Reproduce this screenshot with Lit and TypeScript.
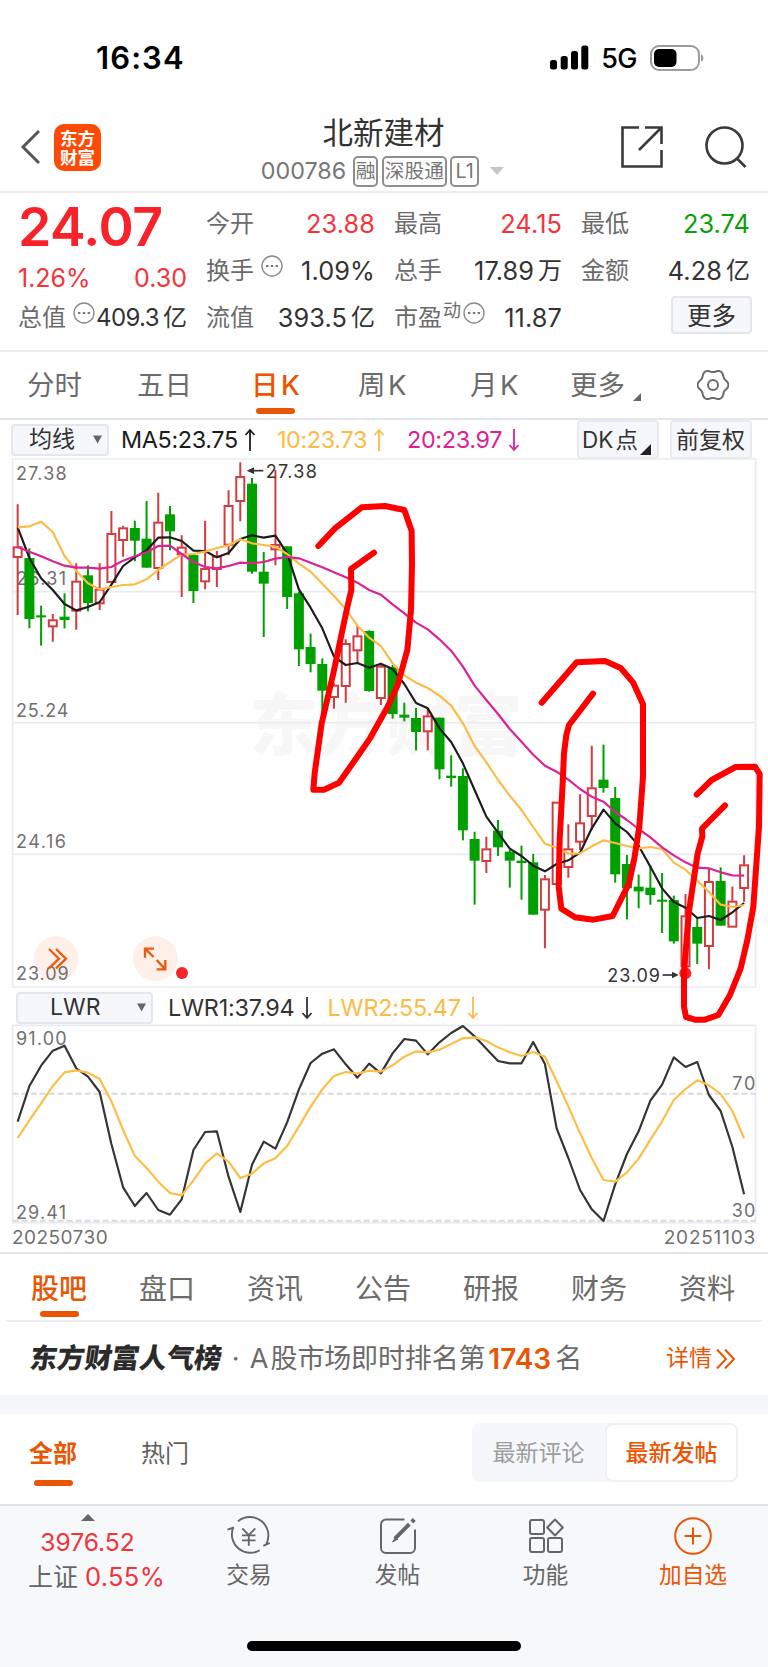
import { LitElement, html, css, svg } from "lit";
import { customElement, property, state } from "lit/decorators.js";
import { classMap } from "lit/directives/class-map.js";

// Both charts are drawn in units of a third of a pixel
const STEP = 35.15;
const FIRST = 53;
const xAt = (i: number) => FIRST + i * STEP;
const toPoints = (ys: number[]) => ys.map((y, i) => `${xAt(i).toFixed(1)},${y}`).join(" ");

// high, body top, body bottom, low, 1 = rising
const CANDLES = [
    [163, 290, 322, 495, 1], [295, 324, 507, 535, 0], [467, 496, 502, 587, 0], [492, 509, 530, 575, 1],
    [430, 500, 510, 535, 0], [340, 393, 483, 539, 1], [346, 376, 459, 484, 0], [340, 417, 461, 480, 1],
    [183, 250, 397, 397, 1], [227, 233, 271, 320, 1], [212, 234, 272, 334, 0], [153, 266, 353, 353, 0],
    [128, 216, 355, 390, 1], [168, 193, 244, 301, 0], [256, 291, 314, 441, 1], [315, 315, 423, 459, 0],
    [212, 355, 395, 418, 1], [303, 318, 358, 411, 1], [121, 166, 285, 316, 1], [37, 79, 154, 214, 1],
    [84, 101, 365, 371, 0], [306, 365, 401, 561, 0], [60, 283, 299, 346, 1], [289, 289, 441, 477, 0],
    [425, 430, 598, 648, 0], [551, 591, 642, 667, 0], [625, 642, 722, 800, 0], [700, 705, 742, 776, 1],
    [568, 580, 709, 758, 1], [527, 557, 602, 640, 1], [541, 543, 723, 725, 0], [645, 648, 745, 765, 1],
    [645, 652, 792, 806, 0], [758, 794, 803, 814, 0], [774, 804, 846, 901, 0], [775, 797, 845, 901, 1],
    [803, 803, 958, 988, 0], [916, 977, 984, 1010, 0], [955, 978, 1141, 1171, 0], [1145, 1167, 1232, 1364, 0],
    [1160, 1196, 1234, 1269, 1], [1110, 1142, 1192, 1218, 0], [1200, 1205, 1232, 1313, 0], [1187, 1232, 1239, 1349, 0],
    [1212, 1237, 1394, 1394, 0], [1275, 1286, 1380, 1495, 1], [1056, 1056, 1303, 1303, 1], [1123, 1196, 1252, 1283, 1],
    [1033, 1118, 1176, 1200, 1], [887, 1013, 1099, 1140, 1], [884, 989, 1014, 1028, 0], [1011, 1044, 1273, 1298, 0],
    [1215, 1242, 1315, 1408, 0], [1274, 1310, 1324, 1375, 0], [1245, 1313, 1335, 1364, 0], [1269, 1349, 1355, 1449, 0],
    [1337, 1350, 1474, 1481, 0], [1332, 1397, 1550, 1570, 1], [1405, 1431, 1481, 1542, 0], [1255, 1294, 1489, 1558, 1],
    [1252, 1293, 1427, 1427, 0], [1310, 1353, 1431, 1431, 1], [1216, 1244, 1315, 1355, 1],
];

const MA5 = [232, 324, 385, 420, 462, 481, 471, 456, 404, 348, 322, 301, 263, 262, 273, 302, 303, 322, 309, 267,
    256, 263, 257, 310, 418, 473, 535, 620, 645, 639, 653, 641, 657, 702, 759, 775, 835, 876, 940, 1020,
    1100, 1148, 1196, 1218, 1247, 1264, 1242, 1231, 1208, 1135, 1079, 1120, 1146, 1187, 1250, 1315, 1356, 1373, 1404, 1398,
    1410, 1387, 1359];

const MA10 = [232, 229, 215, 246, 318, 362, 400, 418, 411, 405, 403, 388, 360, 336, 314, 312, 305, 294, 286, 268,
    280, 285, 290, 312, 341, 365, 401, 438, 477, 527, 563, 588, 640, 676, 698, 714, 737, 767, 820, 888,
    937, 990, 1037, 1080, 1131, 1181, 1193, 1211, 1210, 1189, 1171, 1179, 1188, 1195, 1191, 1197, 1238, 1259, 1292, 1326,
    1364, 1371, 1365];

const MA20 = [291, 305, 319, 334, 347, 353, 353, 356, 351, 332, 319, 307, 288, 287, 312, 336, 351, 355, 348, 338,
    340, 336, 326, 321, 325, 338, 352, 367, 382, 398, 420, 434, 463, 490, 518, 538, 568, 602, 650, 707,
    750, 792, 837, 875, 914, 947, 965, 989, 1017, 1040, 1055, 1086, 1110, 1137, 1162, 1192, 1216, 1237, 1253, 1255,
    1267, 1276, 1277];

const LWR1 = [335, 228, 167, 122, 107, 175, 200, 246, 402, 532, 588, 549, 600, 614, 568, 420, 366, 364, 500, 606,
    464, 395, 416, 337, 239, 159, 131, 118, 163, 203, 161, 190, 130, 87, 92, 133, 97, 69, 48, 79,
    116, 153, 160, 160, 96, 162, 355, 444, 540, 598, 633, 523, 432, 364, 272, 224, 142, 171, 156, 255,
    303, 411, 553];

const LWR2 = [384, 331, 280, 228, 187, 181, 188, 207, 274, 360, 438, 474, 515, 549, 556, 511, 461, 430, 455, 504,
    491, 460, 445, 408, 350, 290, 238, 198, 186, 191, 182, 185, 166, 140, 124, 127, 119, 102, 85, 82,
    93, 112, 127, 138, 126, 140, 213, 289, 370, 444, 510, 515, 487, 446, 389, 334, 270, 237, 211, 226,
    252, 303, 385];

const MARKS = [
    "955,288 1005,235 1085,172 1155,168 1213,180 1235,243 1236,345 1233,480 1222,600 1193,705 1163,770 1110,865 1065,930 1017,998 972,1019 940,1019 944,970 965,820 1000,670 1040,480 1054,420 1053,357 1122,308",
    "1625,758 1730,637 1815,633 1862,654 1899,697 1929,763 1929,980 1918,1130 1903,1225 1887,1300 1838,1398 1780,1409 1725,1402 1684,1376 1676,1310 1679,1170 1688,1000 1692,910 1699,855 1707,825 1779,731",
    "2090,1034 2135,990 2207,951 2265,950 2279,972 2277,1130 2260,1370 2242,1470 2222,1555 2190,1635 2155,1695 2115,1709 2085,1709 2058,1701 2052,1670 2052,1570 2066,1390 2093,1210 2107,1160 2106,1136 2175,1066",
];

// Six-lobed outline of the settings icon
const GEAR = Array.from({ length: 72 }, (_, i) => {
    const a = i * Math.PI / 36;
    const r = 14.2 + 1.3 * Math.cos(6 * a);
    return `${(16 + r * Math.cos(a)).toFixed(2)},${(16 + r * Math.sin(a)).toFixed(2)}`;
}).join(" ");

@customElement("kline-chart")
export class KlineChart extends LitElement {
    static styles = css`
        :host {
            display: block;
            height: 528px;
            position: relative;
            z-index: 1;
        }
        svg {
            display: block;
            width: 768px;
            height: 528px;
            overflow: visible;
        }
        .grid {
            stroke: #e9ebf3;
            stroke-width: 5;
            fill: none;
        }
        .axis {
            font: 54px Inter, sans-serif;
            fill: #707070;
        }
        .tag {
            font: 54px Inter, sans-serif;
            fill: #333;
        }
        .watermark {
            font: 900 206px "Noto Sans CJK SC", sans-serif;
            fill: #f7f7f7;
        }
        .up rect {
            fill: none;
            stroke: #d23c41;
            stroke-width: 6;
        }
        .up path {
            stroke: #d23c41;
            stroke-width: 6;
        }
        .down rect {
            fill: #00a000;
        }
        .down path {
            stroke: #00a000;
            stroke-width: 6;
        }
        .line {
            fill: none;
            stroke-width: 6.5;
            stroke-linejoin: round;
        }
        .ma5 {
            stroke: #1c1c1c;
        }
        .ma10 {
            stroke: #fdbb45;
        }
        .ma20 {
            stroke: #dd2196;
        }
        .mark {
            fill: none;
            stroke: #fe0000;
            stroke-width: 18;
            stroke-linecap: round;
            stroke-linejoin: round;
        }
        .arrow {
            fill: none;
            stroke: #333;
            stroke-width: 5;
        }
        .tip {
            fill: #333;
        }
        .halo {
            fill: #feefe8;
        }
        .orange {
            fill: none;
            stroke: #ea5b10;
            stroke-width: 7;
        }
        .alert {
            fill: #f8222a;
        }
    `;

    candle = (c: number[], i: number) => {
        const x = xAt(i);
        const [high, top, bottom, low, up] = c;
        if (up) {
            return svg`<g class="up">
                <path d="M${x} ${high}V${top}M${x} ${bottom}V${low}"></path>
                <rect x=${x - 12} y=${top + 2} width="24" height=${bottom - top - 3}></rect>
            </g>`;
        }
        return svg`<g class="down">
            <path d="M${x} ${high}V${low}"></path>
            <rect x=${x - 15} y=${top} width="30" height=${bottom - top}></rect>
        </g>`;
    }

    render() {
        return html`
        <svg viewBox="0 27 2304 1584">
            <text class="watermark" x="748" y="899" textLength="820">东方财富</text>
            <path class="grid" d="M38 27H2267V1611H38ZM38 425H2267M38 818H2267M38 1213H2267"></path>
            <circle class="halo" cx="168" cy="1526" r="67"></circle>
            <circle class="halo" cx="466" cy="1526" r="67"></circle>
            <text class="axis" x="48" y="90" textLength="152">27.38</text>
            <text class="axis" x="48" y="404" textLength="150">26.31</text>
            <text class="axis" x="48" y="800" textLength="157">25.24</text>
            <text class="axis" x="48" y="1195" textLength="150">24.16</text>
            <text class="axis" x="48" y="1591" textLength="158">23.09</text>
            ${CANDLES.map(this.candle)}
            <polyline class="line ma5" points=${toPoints(MA5)}></polyline>
            <polyline class="line ma10" points=${toPoints(MA10)}></polyline>
            <polyline class="line ma20" points=${toPoints(MA20)}></polyline>
            <path class="arrow" d="M790 62H750"></path>
            <path class="tip" d="M740 62L762 52V72Z"></path>
            <text class="tag" x="797" y="83" textLength="154">27.38</text>
            <text class="tag" x="1822" y="1597" textLength="158">23.09</text>
            <path class="arrow" d="M1988 1575H2026"></path>
            <path class="tip" d="M2036 1575L2016 1565V1585Z"></path>
            <path class="orange" d="M147 1497L177 1526L147 1555M168 1497L198 1526L168 1555"></path>
            <path class="orange" d="M462 1496H435V1523M435 1496L461 1521M470 1558H496V1530M470 1530L496 1558"></path>
            <circle class="alert" cx="546" cy="1569" r="18"></circle>
            <circle class="alert" cx="2056" cy="1570" r="18"></circle>
            ${MARKS.map(m => svg`<polyline class="mark" points=${m}></polyline>`)}
        </svg>`;
    }
}

@customElement("lwr-chart")
export class LwrChart extends LitElement {
    static styles = css`
        :host {
            display: block;
            height: 198px;
        }
        svg {
            display: block;
            width: 768px;
            height: 198px;
            overflow: visible;
        }
        .frame {
            fill: none;
            stroke: #e9ebf3;
            stroke-width: 5;
        }
        .level {
            stroke: #dadadb;
            stroke-width: 6;
            stroke-dasharray: 18 9;
        }
        .axis {
            font: 54px Inter, sans-serif;
            fill: #707070;
        }
        .line {
            fill: none;
            stroke-width: 6.5;
            stroke-linejoin: round;
        }
        .lwr1 {
            stroke: #343434;
        }
        .lwr2 {
            stroke: #fdbe45;
        }
    `;

    render() {
        return html`
        <svg viewBox="0 45 2304 594">
            <path class="frame" d="M38 46H2267V638H38Z"></path>
            <path class="level" d="M38 251H2267M38 632H2267"></path>
            <text class="axis" x="48" y="105" textLength="152">91.00</text>
            <text class="axis" x="48" y="628" textLength="150">29.41</text>
            <text class="axis" x="2197" y="239" textLength="69">70</text>
            <text class="axis" x="2195" y="620" textLength="71">30</text>
            <polyline class="line lwr1" points=${toPoints(LWR1)}></polyline>
            <polyline class="line lwr2" points=${toPoints(LWR2)}></polyline>
        </svg>`;
    }
}

@customElement("quote-cell")
export class QuoteCell extends LitElement {
    @property() label = "";
    @property() value = "";
    @property() unit = "";
    @property() sup = "";
    @property() tone = "";
    @property({ type: Boolean }) info = false;

    static styles = css`
        :host {
            display: flex;
            align-items: center;
            height: 47px;
            color: #333;
            white-space: nowrap;
        }
        .label {
            color: #6b6b6b;
        }
        .sup {
            font-size: 18px;
            color: #6b6b6b;
            margin: -13px 0 0 1px;
        }
        svg {
            flex: none;
            margin: -10px 0 0 7px;
        }
        .sup + svg {
            margin-left: 2px;
        }
        .value {
            margin-left: auto;
            font-size: 25.3px;
            letter-spacing: 0.1px;
        }
        :host([tight]) .value {
            font-size: 24px;
            letter-spacing: -0.6px;
        }
        .rise {
            color: #f5333a;
        }
        .fall {
            color: #0aa00a;
        }
        .unit {
            margin-left: 4px;
        }
    `;

    render() {
        return html`
        <span class="label">${this.label}</span>
        ${this.sup ? html`<span class="sup">${this.sup}</span>` : ""}
        ${this.info ? html`<svg width="22" height="22" viewBox="0 0 22 22">
            <circle cx="11" cy="11" r="10" fill="none" stroke="#8a8a8a" stroke-width="1.4"></circle>
            <path d="M5 11h2.4M9.8 11h2.4M14.6 11h2.4" stroke="#777" stroke-width="2.2"></path>
        </svg>` : ""}
        <span class="value ${this.tone}">${this.value}</span>
        ${this.unit ? html`<span class="unit">${this.unit}</span>` : ""}`;
    }
}

@customElement("app-root")
export class AppRoot extends LitElement {
    @state() period = "日\u200AK";
    @state() section = "股吧";

    static styles = css`
        * {
            box-sizing: border-box;
        }
        :host {
            display: block;
            width: 768px;
            height: 1667px;
            overflow: hidden;
            background: #fff;
            color: #333;
            font-family: Inter, "Noto Sans CJK SC", sans-serif;
            font-size: 24px;
            line-height: 1;
            white-space: nowrap;
        }
        svg {
            display: block;
            flex: none;
        }
        .status {
            display: flex;
            align-items: center;
            height: 115px;
            padding: 0 64px 0 96px;
            color: #000;
        }
        .clock {
            font-size: 31px;
            font-weight: 600;
            letter-spacing: 1.1px;
        }
        .signal {
            margin-left: auto;
        }
        .net {
            margin: 2px 13px 0 12px;
            font-size: 27px;
            font-weight: 500;
            letter-spacing: -0.5px;
        }
        .header {
            display: flex;
            align-items: center;
            height: 78px;
            padding: 0 21px 12px 20px;
            border-bottom: 2px solid #ededef;
        }
        .logo {
            width: 47px;
            height: 47px;
            margin-left: 13px;
            padding: 4px 6px;
            border-radius: 10px;
            background: #ff4a05;
            color: #fff;
            font: 700 17.5px/19px "Noto Sans CJK SC", sans-serif;
            white-space: normal;
            word-break: break-all;
        }
        .title {
            flex: 1;
            display: flex;
            flex-direction: column;
            align-items: center;
            padding-top: 13px;
        }
        .name {
            font-size: 30.5px;
            line-height: 35px;
            padding-left: 45px;
        }
        .code {
            display: flex;
            align-items: center;
            gap: 3.5px;
            height: 43px;
            padding-left: 43px;
            color: #777;
            font-size: 23.3px;
        }
        .code span {
            margin-right: 3px;
        }
        .code b {
            height: 31px;
            padding: 0 1px;
            border: 2px solid #8e8e8e;
            border-radius: 5px;
            font-weight: 400;
            font-size: 19.7px;
            line-height: 27px;
        }
        .code b:last-of-type {
            padding: 0 3px;
        }
        .code svg {
            margin-left: 8px;
        }
        .search {
            margin-left: 42px;
        }
        .quote {
            display: grid;
            grid-template-columns: 169px 169px 168px 169px;
            column-gap: 19px;
            height: 159px;
            padding: 7px 18px 0;
            border-bottom: 2px solid #ededef;
        }
        .price {
            font-size: 53.5px;
            font-weight: 600;
            line-height: 53px;
            height: 53px;
            letter-spacing: -0.5px;
            color: #f8222a;
        }
        .change {
            display: flex;
            justify-content: space-between;
            height: 41px;
            font-size: 25px;
            line-height: 50px;
        }
        .red {
            color: #f5333a;
        }
        .more {
            width: 81px;
            height: 38px;
            margin: 2px -2px 0 auto;
            border: 2px solid #e4e6eb;
            border-radius: 4px;
            background: #f6f7fa;
            font-size: 24.5px;
            line-height: 36px;
            text-align: center;
        }
        .periods {
            display: grid;
            grid-template-columns: 110px 114px 107px 112px 100px 127px 40px;
            align-items: center;
            height: 68px;
            padding: 0 0 0 27px;
            border-bottom: 2px solid #e4e5ec;
            color: #6b6b6b;
            font-size: 27.5px;
        }
        .tab {
            position: relative;
            display: flex;
            justify-self: start;
            align-items: center;
            height: 100%;
            padding-top: 2px;
        }
        .tab.active {
            color: #ea5504;
            font-weight: 500;
        }
        .tab.active::after {
            content: "";
            position: absolute;
            left: calc(50% - 19.5px);
            bottom: 4px;
            width: 39px;
            height: 6px;
            border-radius: 3px;
            background: #ea5504;
        }
        .corner {
            align-self: flex-end;
            margin: 0 0 17px 8px;
        }
        .indicators {
            display: flex;
            align-items: center;
            height: 39px;
            padding: 0 16px 0 11px;
        }
        .select {
            display: flex;
            align-items: center;
            justify-content: space-between;
            height: 32px;
            border: 2px solid #e4e6ed;
            border-radius: 4px;
            background: #f6f7fa;
            font-size: 23px;
        }
        .avg {
            width: 98px;
            padding: 0 5px 0 16px;
        }
        .lwr {
            width: 137px;
            padding: 0 5px 0 32px;
        }
        .reading {
            display: flex;
            align-items: center;
            gap: 6px;
            font-size: 23.4px;
            letter-spacing: -0.35px;
        }
        .ma5 {
            margin-left: 12px;
            color: #1c1c1c;
        }
        .ma10 {
            margin-left: 21px;
            color: #fdbb45;
        }
        .ma20 {
            margin-left: 22px;
            color: #dd2196;
        }
        .flat {
            display: flex;
            align-items: center;
            height: 39px;
            padding-top: 2px;
            border: 2px solid #e8eaef;
            border-radius: 4px;
            background: #f6f7fa;
            font-size: 23px;
        }
        .dk {
            width: 82px;
            margin-left: auto;
            padding-left: 3px;
            font-size: 22.5px;
        }
        .dk svg {
            align-self: flex-end;
            margin: 0 0 2px 2px;
        }
        .adjust {
            width: 82px;
            margin-left: 11px;
            padding-left: 4px;
        }
        .lwr-row {
            display: flex;
            align-items: center;
            height: 38px;
            padding: 3px 0 0 16px;
        }
        .lwr-row .ma5 {
            margin-left: 15px;
            color: #333;
        }
        .lwr-row .ma10 {
            margin-left: 15px;
            letter-spacing: -0.2px;
        }
        .lwr-row .ma5 {
            letter-spacing: -0.2px;
        }
        .dates {
            display: flex;
            justify-content: space-between;
            height: 31px;
            padding: 5px 12px 0 12px;
            border-bottom: 2px solid #e6e7ee;
            color: #707070;
            font-size: 19px;
            letter-spacing: 0.45px;
        }
        .dates .end {
            letter-spacing: 0.8px;
        }
        .sections {
            display: grid;
            grid-template-columns: repeat(7, 108px);
            align-items: center;
            height: 68px;
            margin: 0 6px;
            padding-left: 25px;
            border-bottom: 2px solid #ededf0;
            color: #6b6b6b;
            font-size: 28px;
        }
        .sections .tab {
            padding-top: 4px;
        }
        .sections .tab.active::after {
            bottom: 3px;
        }
        .rank {
            display: flex;
            align-items: center;
            height: 73px;
            padding: 0 32px 0 30px;
            color: #6b6b6b;
            font-size: 27px;
        }
        .board {
            color: #2b2b2b;
            font-size: 27.4px;
            font-weight: 900;
            transform: skewX(-8deg);
        }
        .dot {
            width: 28px;
            text-align: center;
        }
        .rank .text {
            letter-spacing: -0.15px;
        }
        .rank b {
            margin: 0 4px 0 3px;
            color: #ea5504;
            font-size: 28px;
            font-weight: 600;
        }
        .detail {
            display: flex;
            align-items: center;
            gap: 4px;
            margin-left: auto;
            color: #ea5504;
            font-size: 23px;
        }
        .band {
            height: 19px;
            background: #f5f7fa;
        }
        .filters {
            display: flex;
            height: 92px;
            padding: 0 30px 0 29px;
            border-bottom: 2px solid #e2e3e6;
            color: #5f5f5f;
        }
        .filters .tab {
            height: 80px;
            margin-right: 64px;
            padding-top: 0;
            padding-bottom: 1px;
        }
        .filters .tab.active {
            font-weight: 700;
        }
        .filters .tab.active::after {
            left: 5px;
            bottom: 8px;
        }
        .segment {
            display: flex;
            align-items: center;
            width: 266px;
            height: 59px;
            margin: 9px 0 0 auto;
            border-radius: 8px;
            background: #f5f7fa;
            color: #9d9d9d;
            font-size: 23px;
            line-height: 60px;
        }
        .segment span {
            width: 133px;
            height: 59px;
            text-align: center;
        }
        .segment .on {
            border: 2px solid #eff0f3;
            border-radius: 8px;
            background: #fff;
            color: #ea5504;
            font-weight: 500;
            line-height: 56px;
        }
        .footer {
            height: 162px;
            background: #f6f8fa;
        }
        .dock {
            display: grid;
            grid-template-columns: 175px 148px 149px 147px 148px;
            height: 135px;
        }
        .dock div {
            display: flex;
            flex-direction: column;
            align-items: center;
            color: #666;
            font-size: 22.7px;
        }
        .index svg {
            margin: 8px 0 9px;
        }
        .dock .index {
            font-size: 24.6px;
        }
        .index p {
            margin: 0 0 9px;
        }
        .index .last {
            padding-left: 18px;
            font-size: 25px;
        }
        .last .red {
            font-size: 25.5px;
            letter-spacing: 0.3px;
        }
        .dock .tool {
            padding-top: 10px;
            gap: 8px;
        }
        .dock .add {
            color: #ea5504;
        }
        .home {
            width: 274px;
            height: 10px;
            margin: 0 auto;
            border-radius: 5px;
            background: #000;
        }
    `;

    tab = (name: string, active: boolean, extra: unknown = "") => {
        return html`<span class=${classMap({ tab: true, active })}>${name}${extra}</span>`;
    }

    arrow = (up: boolean) => {
        return html`<svg width="12" height="24" viewBox="0 0 12 24" fill="none" stroke="currentColor" stroke-width="1.8">
            <path d=${up ? "M6 23V2M1.5 7L6 2L10.5 7" : "M6 1V22M1.5 17L6 22L10.5 17"}></path>
        </svg>`;
    }

    caret = () => html`<svg width="9" height="9" viewBox="0 0 9 9"><path d="M0 0.5H9L4.5 8.5Z" fill="#666"></path></svg>`;

    corner = (size: number, color: string) => {
        return html`<svg class="corner" width=${size} height=${size} viewBox="0 0 10 10"><path d="M10 0V10H0Z" fill=${color}></path></svg>`;
    }

    render() {
        return html`
        <div class="status">
            <span class="clock">16:34</span>
            <svg class="signal" width="39" height="25" viewBox="0 0 39 25">
                <rect x="0" y="15" width="7" height="9.5" rx="2.5"></rect>
                <rect x="10.7" y="11" width="7" height="13.5" rx="2.5"></rect>
                <rect x="21" y="6" width="7" height="18.5" rx="2.5"></rect>
                <rect x="31.3" y="0.5" width="7" height="24" rx="2.5"></rect>
            </svg>
            <span class="net">5G</span>
            <svg width="54" height="26" viewBox="0 0 54 26">
                <rect x="1" y="1" width="48" height="24" rx="8" fill="none" stroke="#9b9b9b" stroke-width="2"></rect>
                <rect x="4" y="4" width="22.5" height="18" rx="5"></rect>
                <path d="M51 9v8a4.5 4.5 0 0 0 0-8z" fill="#9b9b9b"></path>
            </svg>
        </div>
        <div class="header">
            <svg width="21" height="36" viewBox="0 0 21 36" fill="none" stroke="#555" stroke-width="3">
                <path d="M19 2L3 18L19 34"></path>
            </svg>
            <span class="logo">东方财富</span>
            <div class="title">
                <span class="name">北新建材</span>
                <div class="code">
                    <span>000786</span><b>融</b><b>深股通</b><b>L1</b>
                    <svg width="14" height="8" viewBox="0 0 14 8"><path d="M0 0H14L7 8Z" fill="#c6c6c6"></path></svg>
                </div>
            </div>
            <svg width="42" height="42" viewBox="0 0 42 42" fill="none" stroke="#3a3a3a" stroke-width="2.6">
                <path d="M18 1.5H1.5V40.5H40.5V24M24 1.5H40.5V18M40.5 1.5L18 24"></path>
            </svg>
            <svg class="search" width="42" height="42" viewBox="0 0 42 42" fill="none" stroke="#3a3a3a" stroke-width="2.6">
                <circle cx="19.5" cy="19.5" r="18"></circle>
                <path d="M31.5 32L40.5 41"></path>
            </svg>
        </div>
        <div class="quote">
            <div>
                <div class="price">24.07</div>
                <div class="change red"><span>1.26%</span><span>0.30</span></div>
                <quote-cell label="总值" info tight value="409.3" unit="亿"></quote-cell>
            </div>
            <div>
                <quote-cell label="今开" value="23.88" tone="rise"></quote-cell>
                <quote-cell label="换手" info value="1.09%"></quote-cell>
                <quote-cell label="流值" value="393.5" unit="亿"></quote-cell>
            </div>
            <div>
                <quote-cell label="最高" value="24.15" tone="rise"></quote-cell>
                <quote-cell label="总手" value="17.89" unit="万"></quote-cell>
                <quote-cell label="市盈" sup="动" info value="11.87"></quote-cell>
            </div>
            <div>
                <quote-cell label="最低" value="23.74" tone="fall"></quote-cell>
                <quote-cell label="金额" value="4.28" unit="亿"></quote-cell>
                <div class="more">更多</div>
            </div>
        </div>
        <div class="periods">
            ${["分时", "五日", "日\u200AK", "周\u200AK", "月\u200AK"].map(p => this.tab(p, p === this.period))}
            ${this.tab("更多", false, this.corner(8, "#666"))}
            <svg width="32" height="32" viewBox="0 0 32 32" fill="none" stroke="#6b6b6b" stroke-width="2">
                <polygon points=${GEAR} stroke-linejoin="round"></polygon>
                <circle cx="16" cy="16" r="5"></circle>
            </svg>
        </div>
        <div class="indicators">
            <span class="select avg">均线${this.caret()}</span>
            <span class="reading ma5">MA5:23.75${this.arrow(true)}</span>
            <span class="reading ma10">10:23.73${this.arrow(true)}</span>
            <span class="reading ma20">20:23.97${this.arrow(false)}</span>
            <span class="flat dk">DK\u200A点${this.corner(11, "#222")}</span>
            <span class="flat adjust">前复权</span>
        </div>
        <kline-chart></kline-chart>
        <div class="lwr-row">
            <span class="select lwr">LWR${this.caret()}</span>
            <span class="reading ma5">LWR1:37.94${this.arrow(false)}</span>
            <span class="reading ma10">LWR2:55.47${this.arrow(false)}</span>
        </div>
        <lwr-chart></lwr-chart>
        <div class="dates"><span>20250730</span><span class="end">20251103</span></div>
        <div class="sections">
            ${["股吧", "盘口", "资讯", "公告", "研报", "财务", "资料"].map(s => this.tab(s, s === this.section))}
        </div>
        <div class="rank">
            <span class="board">东方财富人气榜</span>
            <span class="dot">·</span>
            <span class="text">A\u200A股市场即时排名第</span><b>1743</b><span>名</span>
            <span class="detail">详情
                <svg width="20" height="22" viewBox="0 0 20 22" fill="none" stroke="#ea5504" stroke-width="2">
                    <path d="M1 1.5L10 11L1 20.5M9 1.5L18 11L9 20.5"></path>
                </svg>
            </span>
        </div>
        <div class="band"></div>
        <div class="filters">
            ${this.tab("全部", true)}${this.tab("热门", false)}
            <div class="segment"><span>最新评论</span><span class="on">最新发帖</span></div>
        </div>
        <div class="footer">
            <div class="dock">
                <div class="index">
                    <svg width="14" height="7" viewBox="0 0 14 7"><path d="M7 0L14 7H0Z" fill="#666"></path></svg>
                    <p class="red">3976.52</p>
                    <p class="last">上证 <span class="red">0.55%</span></p>
                </div>
                <div class="tool">
                    <svg width="44" height="40" viewBox="0 0 44 40" fill="none" stroke="#666" stroke-width="1.9">
                        <path d="M11 5.3A18.5 18.5 0 0 1 39.3 28M36.3 29.8L42.7 26.8M32.7 34.3A18.5 18.5 0 0 1 6 12M0.5 13.7L7 11.5"></path>
                        <path d="M15.3 12.3L21.8 19.2L28.3 12.3M21.8 19.2V29.7M15 19.4H28.5M15 24.4H28.5"></path>
                    </svg>
                    交易
                </div>
                <div class="tool">
                    <svg width="38" height="40" viewBox="0 0 38 40" fill="none" stroke="#666" stroke-width="2">
                        <path d="M25.5 3.5H7A5 5 0 0 0 2 8.5V32A5 5 0 0 0 7 37H31A5 5 0 0 0 36 32V13.5"></path>
                        <path d="M30.3 8.2L16 22.7" stroke-width="4"></path>
                        <path d="M17 20.5L13.5 26L19 23" fill="#666" stroke-width="1"></path>
                        <path d="M32.8 6L35.3 3.5" stroke-width="4"></path>
                    </svg>
                    发帖
                </div>
                <div class="tool">
                    <svg width="36" height="40" viewBox="0 0 36 40" fill="none" stroke="#666" stroke-width="2">
                        <rect x="2" y="4" width="14" height="14" rx="2"></rect>
                        <rect x="2" y="22" width="14" height="14" rx="2"></rect>
                        <rect x="20" y="22" width="14" height="14" rx="2"></rect>
                        <path d="M27 3.5L34.8 11.5L27 19.5L19.2 11.5Z" stroke-linejoin="round"></path>
                    </svg>
                    功能
                </div>
                <div class="tool add">
                    <svg width="40" height="40" viewBox="0 0 40 40" fill="none" stroke="#ea5504" stroke-width="2">
                        <circle cx="20" cy="20" r="17.8"></circle>
                        <path d="M20 11.5V28.5M11.5 20H28.5"></path>
                    </svg>
                    加自选
                </div>
            </div>
            <div class="home"></div>
        </div>`;
    }
}
